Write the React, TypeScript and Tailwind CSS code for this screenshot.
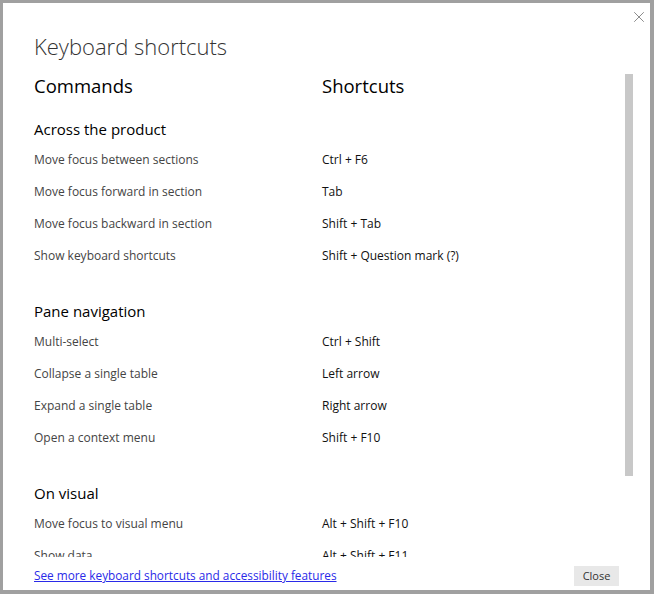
import { X } from "lucide-react"

type Row = { command: string; keys: string }

const sections: { title: string; rows: Row[] }[] = [
  {
    title: "Across the product",
    rows: [
      { command: "Move focus between sections", keys: "Ctrl + F6" },
      { command: "Move focus forward in section", keys: "Tab" },
      { command: "Move focus backward in section", keys: "Shift + Tab" },
      { command: "Show keyboard shortcuts", keys: "Shift + Question mark (?)" },
    ],
  },
  {
    title: "Pane navigation",
    rows: [
      { command: "Multi-select", keys: "Ctrl + Shift" },
      { command: "Collapse a single table", keys: "Left arrow" },
      { command: "Expand a single table", keys: "Right arrow" },
      { command: "Open a context menu", keys: "Shift + F10" },
    ],
  },
  {
    title: "On visual",
    rows: [
      { command: "Move focus to visual menu", keys: "Alt + Shift + F10" },
      { command: "Show data", keys: "Alt + Shift + F11" },
      { command: "Enter a visual", keys: "Ctrl + Right arrow" },
    ],
  },
]

export default function App() {
  return (
    <div className="w-[654px] h-[594px] bg-white border-[#a0a0a0] border-l-[3px] border-t-[3px] border-r-4 border-b-4 relative flex flex-col font-['Open_Sans',sans-serif]">
      <button className="absolute top-[5px] right-[2px] w-[18px] h-[18px] flex items-center justify-center text-[#666]">
        <X className="w-[18px] h-[18px]" strokeWidth={1} />
      </button>

      <div className="h-[67px] pt-[27px] pl-[31px] shrink-0">
        <h1 className="text-[22px] leading-[32px] font-light text-[#333]">Keyboard shortcuts</h1>
      </div>

      <div className="h-[487px] flex shrink-0 overflow-hidden">
        <div className="flex-1 pl-[31px] pt-[2px]">
          <div className="flex h-[28px] items-center text-[18.5px] text-black">
            <div className="w-[288px]">Commands</div>
            <div>Shortcuts</div>
          </div>

          {sections.map((section, i) => (
            <div key={section.title} className={i === 0 ? "mt-[14px]" : "mt-[25px]"}>
              <div
                className={
                  i === 0
                    ? "h-[30px] flex items-center text-[15px] text-black"
                    : "h-[29px] flex items-center text-[15px] text-black"
                }
              >
                {section.title}
              </div>
              {section.rows.map((row) => (
                <div key={row.command} className="h-8 flex items-center text-[12px]">
                  <div className="w-[288px] text-[#444]">{row.command}</div>
                  <div className="text-[#111]">{row.keys}</div>
                </div>
              ))}
            </div>
          ))}
        </div>
        <div className="w-[25px] shrink-0 pt-[4px]">
          <div className="w-2 h-[402px] bg-[#c8c8c8]" />
        </div>
      </div>

      <div className="flex-1 flex items-center justify-between pl-[31px] pr-[31px] pt-[5px]">
        <a href="#" className="text-[11.8px] text-[#2a2ae8] underline">
          See more keyboard shortcuts and accessibility features
        </a>
        <button className="w-[45px] h-5 bg-[#e8e8e8] text-[11px] text-[#333]">Close</button>
      </div>
    </div>
  )
}
